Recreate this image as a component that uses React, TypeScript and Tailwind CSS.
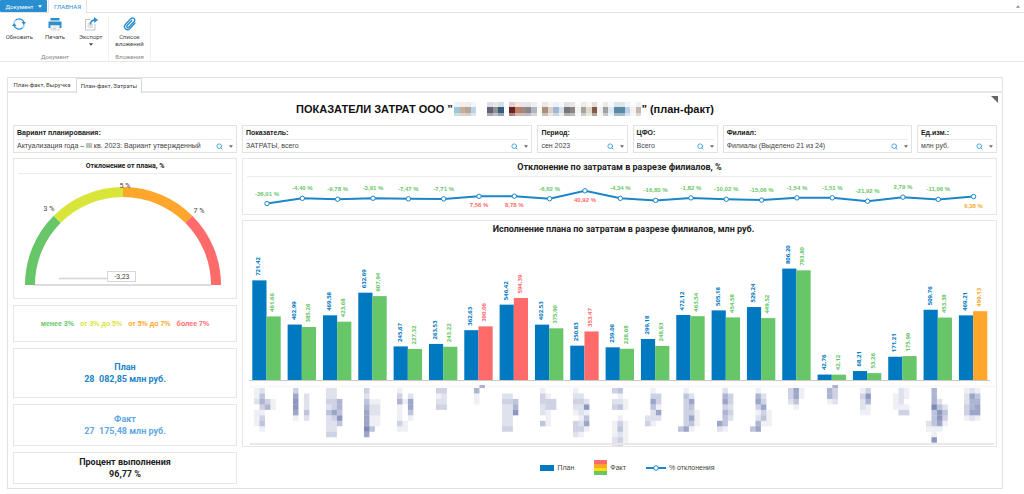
import React from "react";
import { Search } from "lucide-react";

type Row = { plan: string; fact: string; dev: string; x: number; blur: string[]; cap?: string };

const BLUE = "#0079c1";
const GREEN = "#67c667";
const RED = "#ff6b6b";
const ORANGE = "#ffa62b";

const rows: Row[] = [
  { plan: "721,42", fact: "461,66", dev: "-36,01", x: 11, blur: ["12", "14", "2531", ".351", "11", "13", "14", ".1"] },
  { plan: "402,99", fact: "385,26", dev: "-4,40", x: 50, blur: ["3", "6.2", "7.2", "7.2", "6.4", "1.2"] },
  { plan: "469,58", fact: "423,68", dev: "-9,78", x: 83, blur: ["22", "22", "335", "235", "464", "237", "224", "22", "33"] },
  { plan: "632,69", fact: "607,94", dev: "-3,91", x: 121, blur: ["3", "2", "411", "522", "622", "611", "611", "84", "6"] },
  { plan: "245,67", fact: "227,32", dev: "-7,47", x: 154, blur: ["1", "3.2", "516", "1.6", "1.4", "1.1", "31", "11"] },
  { plan: "263,53", fact: "243,22", dev: "-7,71", x: 193, blur: ["33", "12", "22", "33"] },
  { plan: "362,63", fact: "390,06", dev: "7,56", x: 231, cap: ".5", blur: ["5", "1", "1"] },
  { plan: "546,42", fact: "594,39", dev: "8,78", x: 259, blur: ["", "22", "334", "225", "227", "22", "22", "33"] },
  { plan: "402,53", fact: "375,90", dev: "-6,62", x: 297, blur: ["1", "31", "333", "233", "21", ".1", "41"] },
  { plan: "250,83", fact: "353,47", dev: "40,92", x: 330, blur: ["1", "22", "332", "227", "121", ".14", "326", "331", "21"] },
  { plan: "239,06", fact: "228,68", dev: "-4,34", x: 369, blur: ["34", ".1", "221", "341", "", ".1", "131", "141", "121", "231", "23"] },
  { plan: "299,18", fact: "248,93", dev: "-16,80", x: 402, blur: [".1", ".33", ".63", ".41", ".26", "222", "31"] },
  { plan: "472,12", fact: "463,54", dev: "-1,82", x: 435, blur: [".1", ".42", ".36", ".34", ".331", ".361", ".341", "461"] },
  { plan: "505,18", fact: "454,58", dev: "-10,02", x: 474, blur: [".2", ".53", ".63", ".32", ".53", ".42", "64", "21"] },
  { plan: "529,24", fact: "449,52", dev: "-15,06", x: 507, blur: [".1", ".52", ".63", ".36", ".131", ".241", ".511", "46"] },
  { plan: "806,20", fact: "793,80", dev: "-1,54", x: 545, blur: ["361", "361", "24", ".1"] },
  { plan: "42,76", fact: "42,12", dev: "-1,51", x: 584, cap: ".5", blur: ["53", "53", "12"] },
  { plan: "68,21", fact: "53,26", dev: "-21,92", x: 617, blur: ["13", "37", "25", "21", "11"] },
  { plan: "171,21", fact: "175,99", dev: "2,79", x: 650, blur: [".21", "121", "12", "111", ".33"] },
  { plan: "509,76", fact: "453,38", dev: "-11,06", x: 683, blur: [".5", ".5", ".52", ".842", ".474", ".473", "2461", "111", ".1", ".7"] },
  { plan: "469,21", fact: "499,13", dev: "6,38", x: 721, blur: ["121", "264", "255", "356", "366", "121"] },
];

const num = (s: string) => Number(s.replace(",", "."));
const factColor = (d: number) => (d > 7 ? RED : d > 5 ? ORANGE : GREEN);
const STEP = 35.33;

function Caret({ className = "" }: { className?: string }) {
  return (
    <svg viewBox="0 0 6 4" className={`h-[3px] w-[4px] ${className}`} aria-hidden="true">
      <path d="M0 0h6L3 4z" fill="currentColor" />
    </svg>
  );
}

function RefreshIcon() {
  return (
    <svg viewBox="0 0 28 28" className="size-[14px]" aria-hidden="true">
      <g fill="none" stroke="#2a8fd0" strokeWidth="2.6">
        <path d="M7 6.500A10.500 10.500 0 0 1 24 11" />
        <path d="M21 21.500A10.500 10.500 0 0 1 4 17" />
        <path d="M3.500 13A10.500 10.500 0 0 1 7 6.500" opacity="0.5" />
        <path d="M24.500 15A10.500 10.500 0 0 1 21 21.500" opacity="0.5" />
      </g>
      <path d="M19 10h9l-4.500 6zM0 18h9L4.500 12z" fill="#2a8fd0" />
    </svg>
  );
}

function PrintIcon() {
  return (
    <svg viewBox="0 0 28 28" className="size-[14px]" aria-hidden="true">
      <path d="M5 2h18v5H5z" fill="#2a8fd0" />
      <path d="M1 9h26v13h-4v-6H5v6H1z" fill="#2a8fd0" />
      <path d="M6 17h16v9H6z" fill="#fff" stroke="#c4c4c4" strokeWidth="1.500" />
      <path d="M9 20h10M9 23h7" stroke="#c4c4c4" strokeWidth="1.500" />
    </svg>
  );
}

function ExportIcon() {
  return (
    <svg viewBox="0 0 28 28" className="size-[14px]" aria-hidden="true">
      <path d="M13 5H3v21h19V14" fill="none" stroke="#c4c4c4" strokeWidth="2" />
      <path d="M7 12h5M7 16h11M7 20h11" stroke="#c4c4c4" strokeWidth="2" />
      <path d="M13 15c0-7 3-9 9-9" fill="none" stroke="#2a8fd0" strokeWidth="3" />
      <path d="M20 0l8 6-8 6z" fill="#2a8fd0" />
    </svg>
  );
}

function ClipIcon() {
  return (
    <svg viewBox="0 0 24 24" className="size-[14px]" aria-hidden="true">
      <path
        d="M20.500 10.500l-9 9.500a5 5 0 0 1-7.500-7l9.500-10a3.600 3.600 0 0 1 5.500 5l-9 9.500a2 2 0 0 1-3-2.800l8-8.500"
        fill="none"
        stroke="#2a8fd0"
        strokeWidth="2.400"
        strokeLinecap="round"
      />
    </svg>
  );
}

function Tool({ label, icon, menu }: { label: string; icon: React.ReactNode; menu?: boolean }) {
  return (
    <button type="button" className="flex w-[35px] flex-col items-center text-[#444]">
      {icon}
      <span className="mt-[2px] text-[6px] leading-[7px]">{label}</span>
      {menu && <Caret className="mt-[3px]" />}
    </button>
  );
}

function Ribbon() {
  return (
    <header>
      <div className="flex h-[13px] items-stretch border-b border-[#e4e4e4]">
        <button type="button" className="flex h-[12px] w-[47px] items-center justify-center gap-[4px] rounded-[1px] bg-[#2a8fd0] text-[6px] text-white">
          Документ <Caret />
        </button>
        <a href="#main" className="-mb-px ml-[1px] flex w-[39px] items-center justify-center border-x border-[#e4e4e4] bg-white text-[6px] text-[#2a8fd0]">
          ГЛАВНАЯ
        </a>
        <button type="button" aria-label="Свернуть ленту" className="mr-[4px] ml-auto text-[#888]">
          <Caret className="rotate-180" />
        </button>
      </div>
      <div className="flex h-[49px] border-b border-[#e8e8e8] pt-[4px]">
        <section className="flex w-[109px] flex-col border-r border-[#f0f0f0] pl-[2px]">
          <div className="flex gap-[1px]">
            <Tool label="Обновить" icon={<RefreshIcon />} />
            <Tool label="Печать" icon={<PrintIcon />} />
            <Tool label="Экспорт" icon={<ExportIcon />} menu />
          </div>
          <h2 className="mt-auto text-center text-[6px] leading-[9px] text-[#888]">Документ</h2>
        </section>
        <section className="flex w-[42px] flex-col items-center border-r border-[#f0f0f0]">
          <Tool label="Список вложений" icon={<ClipIcon />} />
          <h2 className="mt-auto text-center text-[6px] leading-[9px] text-[#888]">Вложения</h2>
        </section>
      </div>
    </header>
  );
}

function Filter({ id, label, value }: { id: string; label: string; value: string }) {
  return (
    <div className="min-w-0 border border-[#e2e2e2] bg-white px-[3px] font-['Liberation_Sans',Arial,sans-serif] text-[7px]">
      <label htmlFor={id} className="block border-b border-[#ececec] leading-[13px] font-bold text-[#222]">
        {label}
      </label>
      <div className="flex h-[12px] items-center">
        <select id={id} className="h-[12px] min-w-0 flex-1 appearance-none bg-transparent p-0 leading-[12px] text-[#444]">
          <option>{value}</option>
        </select>
        <button type="button" aria-label="Найти" className="mr-[6px] text-[#3a9fe0]">
          <Search className="size-[7px]" strokeWidth={3} />
        </button>
        <button type="button" aria-label="Открыть" className="text-[#666]">
          <Caret />
        </button>
      </div>
    </div>
  );
}

const mosaic =
  "#a0c4d8 #c8ae98 #b5a898 #b8d4ec #ffffff #ffffff #65607a #8a9490 #3a5a7c #ffffff #682020 #c08060 #a08880 #868890 #b4b4c0 #fbf8f0 #a89080 #e0d0c4 #a0b8d8 #d8e0f0 #7a7478 #8a8488 #f4f4f4 #a8a4a0 #e0d8c8 #805a4a #f0f0f0 #a0a0a0 #dceaf4 #5a88a8 #5a88a0 #b8d0e8 #f4f2f0 #c0b8b0".split(" ");

const bands = [
  { y: 0, h: 5, opacity: 0.2 },
  { y: 5, h: 6, opacity: 1 },
  { y: 11, h: 3, opacity: 0.55 },
];

function MaskedName() {
  return (
    <svg viewBox="0 0 187 14" className="h-[14px] w-[187px]" aria-hidden="true" shapeRendering="crispEdges">
      {bands.map((b) => (
        <g key={b.y} opacity={b.opacity}>
          {mosaic.map((c, i) => (
            <rect key={i} x={i * 5.5} y={b.y} width="5.5" height={b.h} fill={c} />
          ))}
        </g>
      ))}
    </svg>
  );
}

function Gauge() {
  const cx = 109;
  const cy = 111;
  const arc = (a: number, b: number) => {
    const p = (r: number, d: number) => {
      const t = (d * Math.PI) / 180;
      return `${(cx - r * Math.cos(t)).toFixed(2)} ${(cy - r * Math.sin(t)).toFixed(2)}`;
    };
    return `M${p(98, a)}A98 98 0 0 1 ${p(98, b)}L${p(88, b)}A88 88 0 0 0 ${p(88, a)}Z`;
  };
  return (
    <svg viewBox="0 0 222 124" className="block w-full" role="img" aria-label="Отклонение от плана">
      <path d="M20 111H197" stroke="#dcdcdc" strokeWidth="2" />
      <path d={arc(0, 45)} fill={GREEN} />
      <path d={arc(45, 90)} fill="#d9e53a" />
      <path d={arc(90, 135)} fill={ORANGE} />
      <path d={arc(135, 180)} fill={RED} />
      <path d="M45 104.500H94" stroke="#d4d4d4" strokeWidth="1.500" />
      <rect x="93.500" y="97.500" width="28" height="10" fill="#fff" stroke="#d8d8d8" />
      <g fontSize="7" fill="#444" textAnchor="middle">
        <text x="108" y="105">-3,23</text>
        <text x="35" y="37">3 %</text>
        <text x="111" y="14">5 %</text>
        <text x="185" y="39">7 %</text>
      </g>
    </svg>
  );
}

function DeviationChart() {
  const pts = rows.map((r, i) => ({ x: 24 + i * STEP, y: 20.6 - num(r.dev) * 0.166, d: r.dev }));
  return (
    <svg viewBox="0 0 753 37" className="block w-full font-['Liberation_Sans',Arial,sans-serif]" role="img" aria-label="Отклонение по затратам">
      <polyline points={pts.map((p) => `${p.x},${p.y}`).join(" ")} fill="none" stroke="#1b86c8" strokeWidth="2" />
      {pts.map((p) => {
        const low = num(p.d) > 5;
        return (
          <g key={p.x}>
            <circle cx={p.x} cy={p.y} r="2.200" fill="#fff" stroke="#1b86c8" />
            <text x={p.x} y={low ? p.y + 11 : p.y - 8} textAnchor="middle" fontSize="6" fontWeight="bold" fill={factColor(num(p.d))}>
              {p.d} %
            </text>
          </g>
        );
      })}
    </svg>
  );
}

function BarChart() {
  const base = 143.5;
  const k = 0.1388;
  return (
    <svg viewBox="0 0 753 209" className="block w-full" role="img" aria-label="Исполнение плана по затратам">
      <rect x="7" y="148" width="745" height="3" fill="#fafafa" />
      {rows.map((r, i) => {
        const x = 9.3 + i * STEP;
        const p = num(r.plan) * k;
        const f = num(r.fact) * k;
        const color = factColor(num(r.dev));
        return (
          <g key={r.x}>
            <rect x={x} y={base - p} width="14.200" height={p} fill={BLUE} />
            <rect x={x + 14.2} y={base - f} width="14.200" height={f} fill={color} />
            <g fontSize="6" fontWeight="bold" fontFamily="'Open Sans', sans-serif">
              <text transform={`translate(${x + 8} ${base - p - 4.500}) rotate(-90)`} fill={BLUE}>{r.plan}</text>
              <text transform={`translate(${x + 22} ${base - f - 4.500}) rotate(-90)`} fill={color}>{r.fact}</text>
            </g>
            <g fill="#4c5c9c">
              {(r.cap ?? "").split("").map((c, n) =>
                c === "." ? null : <rect key={n} x={r.x + n * 5.45} y="148" width="5.500" height="3" opacity={Number(c) / 11} />,
              )}
              {r.blur.map((line, m) =>
                line.split("").map((c, n) =>
                  c === "." ? null : (
                    <rect key={`${m}-${n}`} x={r.x + n * 5.45} y={151 + m * 5.47} width="5.450" height="5.470" opacity={Number(c) / 11} />
                  ),
                ),
              )}
            </g>
          </g>
        );
      })}
      <path d="M6 143.500H747" stroke="#c8c8c8" />
      <path d="M7 207H751" stroke="#e8e8e8" strokeWidth="2" />
    </svg>
  );
}

function Kpi({ title, value, className }: { title: string; value: string; className: string }) {
  return (
    <section className={`border border-[#e6e6e6] text-center text-[9px] leading-[12px] font-bold whitespace-pre ${className}`}>
      <h3>{title}</h3>
      <p>{value}</p>
    </section>
  );
}

export default function App() {
  return (
    <div className="bg-white font-['Roboto','Liberation_Sans',Arial,sans-serif] text-[#222]">
      <Ribbon />
      <main id="main" className="mt-[15px] mr-[21px] ml-[7px] border border-[#e2e2e2]">
        <nav className="flex h-[15px] border-b-2 border-[#e6e6e6] text-[6px] text-[#444]">
          <a href="#revenue" className="flex w-[68px] items-center justify-center">План-факт, Выручка</a>
          <a href="#costs" className="-mb-[2px] flex w-[66px] items-center justify-center border-x border-t border-[#d8d8d8] bg-white pb-[2px]">План-факт, Затраты</a>
        </nav>
        <div className="relative px-[5px] pb-[4px]">
          <svg viewBox="0 0 6 6" className="absolute top-[3px] right-[4px] size-[7px]" aria-hidden="true">
            <path d="M0 0h6v6z" fill="#666" />
          </svg>
          <h1 className="flex h-[32px] items-center justify-center gap-[1px] font-['Liberation_Sans',Arial,sans-serif] text-[11px] font-bold text-[#111]">
            ПОКАЗАТЕЛИ ЗАТРАТ ООО "<MaskedName />" (план-факт)
          </h1>
          <div className="grid grid-cols-[224fr_755fr] items-start gap-x-[5px] gap-y-[5px]">
            <Filter id="variant" label="Вариант планирования:" value="Актуализация года – III кв. 2023: Вариант утвержденный" />
            <div className="grid grid-cols-[290fr_90fr_85fr_189fr_80fr] gap-[5px]">
              <Filter id="metric" label="Показатель:" value="ЗАТРАТЫ, всего" />
              <Filter id="period" label="Период:" value="сен 2023" />
              <Filter id="cfo" label="ЦФО:" value="Всего" />
              <Filter id="branch" label="Филиал:" value="Филиалы (Выделено 21 из 24)" />
              <Filter id="unit" label="Ед.изм.:" value="млн руб." />
            </div>
            <div className="flex flex-col gap-[6px]">
              <section className="border border-[#e6e6e6]">
                <h2 className="mx-[4px] border-b border-[#ececec] text-center text-[7px] leading-[14px] font-bold">Отклонение от плана, %</h2>
                <Gauge />
              </section>
              <ul className="flex justify-center gap-[6px] border border-[#e6e6e6] py-[13px] font-['Liberation_Sans',Arial,sans-serif] text-[7px] leading-[9px] font-bold">
                <li className="text-[#67c667]">менее 3%</li>
                <li className="text-[#d9e53a]">от 3% до 5%</li>
                <li className="text-[#ffa62b]">от 5% до 7%</li>
                <li className="text-[#ff6b6b]">более 7%</li>
              </ul>
              <Kpi title="План" value="28  082,85 млн руб." className="py-[12px] text-[#1b86c8]" />
              <Kpi title="Факт" value="27  175,48 млн руб." className="py-[8px] text-[#5fa8e4]" />
              <Kpi title="Процент выполнения" value="96,77 %" className="py-[3px] text-[#222]" />
            </div>
            <div className="flex flex-col gap-[5px]">
              <section className="border border-[#e6e6e6]">
                <h2 className="mx-[4px] border-b border-[#ececec] text-center text-[9px] leading-[17px] font-bold">Отклонение по затратам в разрезе филиалов, %</h2>
                <DeviationChart />
              </section>
              <section className="border border-[#e6e6e6]">
                <h2 className="pl-[8px] text-center text-[9px] leading-[16px] font-bold">Исполнение плана по затратам в разрезе филиалов, млн руб.</h2>
                <BarChart />
              </section>
              <ul className="mt-[8px] flex items-center justify-center gap-[20px] pl-[16px] font-['Liberation_Sans',Arial,sans-serif] text-[7px] leading-[14px] text-[#444]">
                <li className="flex items-center gap-[3px]">
                  <span className="h-[6px] w-[14px] bg-[#0079c1]" />План
                </li>
                <li className="flex items-center gap-[3px]">
                  <svg viewBox="0 0 13 15" className="h-[15px] w-[13px]" aria-hidden="true">
                    <path d="M0 0h13v4H0z" fill="#ff6b6b" />
                    <path d="M0 4h13v4H0z" fill="#ffa62b" />
                    <path d="M0 8h13v3H0z" fill="#ffdd00" />
                    <path d="M0 11h13v4H0z" fill="#67c667" />
                  </svg>
                  Факт
                </li>
                <li className="flex items-center gap-[3px]">
                  <svg viewBox="0 0 20 6" className="h-[6px] w-[20px]" aria-hidden="true">
                    <path d="M0 3h20" stroke="#1b86c8" strokeWidth="2" />
                    <circle cx="10" cy="3" r="2.300" fill="#fff" stroke="#1b86c8" />
                  </svg>
                  % отклонения
                </li>
              </ul>
            </div>
          </div>
        </div>
      </main>
    </div>
  );
}
